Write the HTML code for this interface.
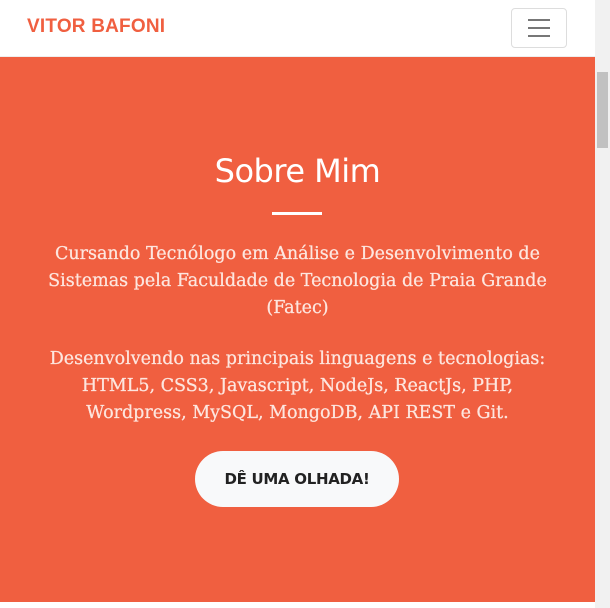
<!DOCTYPE html>
<html><head><style>
body{margin:0;width:610px;height:608px;overflow:hidden;background:#fff;position:relative;font-family:"Liberation Sans",sans-serif}
.nav{position:absolute;left:0;top:0;width:595px;height:56px;background:#fff;border-bottom:1px solid #eee}
.brand{position:absolute;left:27px;top:16px;font-weight:bold;font-size:19px;color:#f05f40;letter-spacing:0.2px}
.tog{position:absolute;left:511px;top:8px;width:56px;height:40px;border:1px solid #ddd;border-radius:4px;box-sizing:border-box}
.tog i{position:absolute;left:16px;width:22px;height:2px;background:#777}
.hero{position:absolute;left:0;top:57px;width:595px;height:545px;background:#f05f40;color:#fff;text-align:center}
h1{margin:0;position:absolute;top:95px;width:100%;font-weight:normal;font-size:32px;font-family:"DejaVu Sans","Liberation Sans",sans-serif;letter-spacing:-0.5px}
hr{position:absolute;left:272px;top:155px;width:50px;margin:0;border:0;height:3px;background:#fff}
p{position:absolute;left:40px;width:515px;margin:0;font-family:"DejaVu Serif",serif;font-size:17.5px;line-height:27px;color:#fde6df;-webkit-text-stroke:0.25px #fde6df}
.btn{position:absolute;left:195px;top:394px;width:204px;height:56px;border-radius:28px;background:#f8f9fa;color:#222;font-weight:bold;font-size:15px;line-height:56px;font-family:"DejaVu Sans",sans-serif;letter-spacing:-0.3px}
.sb{position:absolute;left:595px;top:0;width:15px;height:608px;background:#f1f1f1}
.th{position:absolute;left:597px;top:72px;width:11px;height:76px;background:#c1c1c1}
</style></head><body>
<div class="nav"><div class="brand">VITOR BAFONI</div><div class="tog"><i style="top:10px"></i><i style="top:18px"></i><i style="top:26px"></i></div></div>
<div class="hero">
<h1>Sobre Mim</h1><hr>
<p style="top:184px">Cursando Tecnólogo em Análise e Desenvolvimento de Sistemas pela Faculdade de Tecnologia de Praia Grande (Fatec)</p>
<p style="top:289px">Desenvolvendo nas principais linguagens e tecnologias: HTML5, CSS3, Javascript, NodeJs, ReactJs, PHP, Wordpress, MySQL, MongoDB, API REST e Git.</p>
<div class="btn">DÊ UMA OLHADA!</div>
</div>
<div class="sb"></div><div class="th"></div>
</body></html>
